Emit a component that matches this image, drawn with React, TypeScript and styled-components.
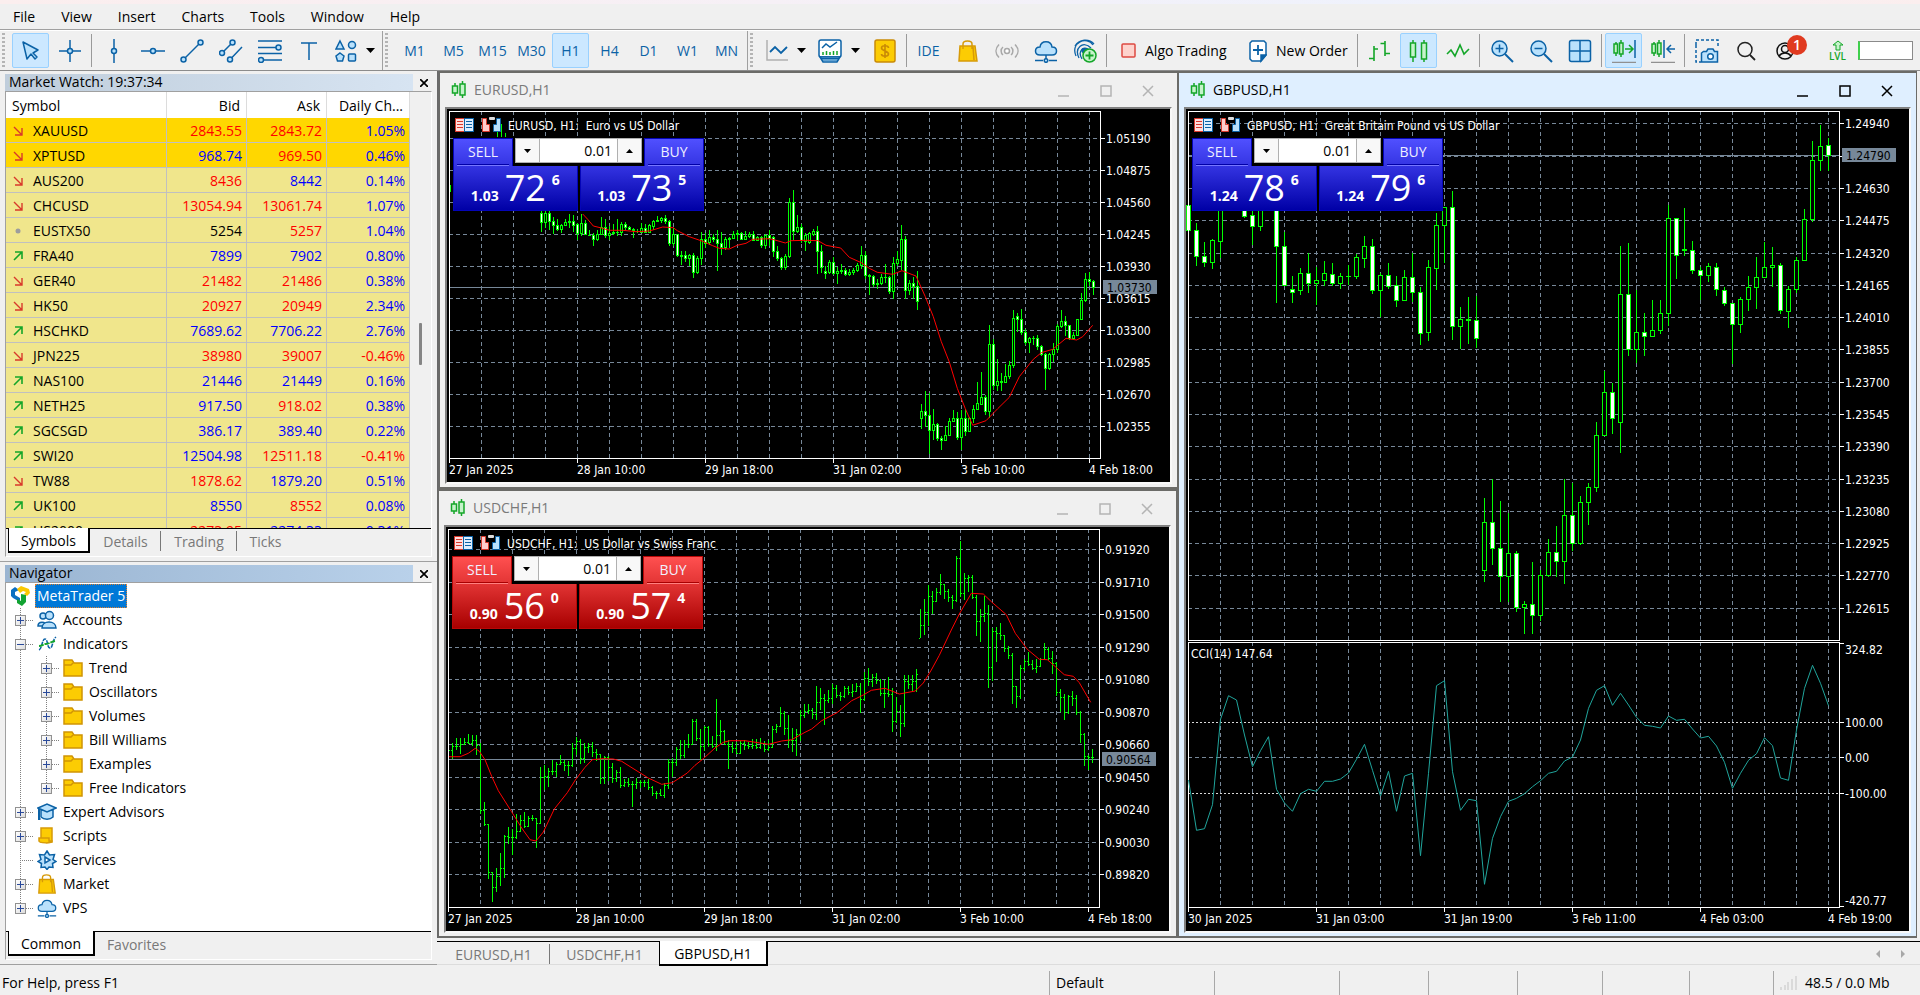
import React from 'react';
import styled, { createGlobalStyle, css } from 'styled-components';

const Global = createGlobalStyle`
  * { box-sizing: border-box; }
  body { margin: 0; background: #f0f0f0; }
  button, input { font: inherit; color: inherit; }
`;

const UI_FONT = '"Open Sans", "Noto Sans", sans-serif';
const CHART_FONT = '"DejaVu Sans Condensed", "DejaVu Sans", sans-serif';
const BLUE = '#0b62a6';
const SKY = '#b9e1fc';
const GREEN = '#14a629';
const MINT = '#c6f3cb';
const GOLD = '#fccc03';
const AMBER = '#c98a06';

/* ---------- shell ---------- */

const Shell = styled.div`
  display: flex;
  flex-direction: column;
  height: 100vh;
  overflow: hidden;
  background: #f0f0f0;
  color: #000;
  font-family: ${UI_FONT};
  font-size: 14px;
  line-height: 20px;
`;

const TopStrip = styled.div`
  flex: none;
  height: 4px;
  background: linear-gradient(90deg, #fbeeee 0%, #f6f0f6 40%, #eff2fc 72%, #fbeeee 100%);
`;

const MenuBar = styled.nav`
  flex: none;
  display: flex;
  align-items: center;
  gap: 26px;
  height: 27px;
  padding-left: 13px;
  border-bottom: 1px solid #fff;
  box-shadow: inset 0 -1px 0 #a0a0a0;
`;

const MenuItem = styled.button`
  border: 0;
  padding: 0;
  background: none;
  line-height: 20px;
`;

const Toolbars = styled.div`
  flex: none;
  display: flex;
  height: 40px;
  border-bottom: 1px solid #8c8c8c;
`;

const ToolGroup = styled.div<{ $grow?: boolean; $wide?: boolean }>`
  flex: ${p => (p.$grow ? '1 1 0' : 'none')};
  min-width: 0;
  display: flex;
  align-items: center;
  gap: 2px;
  padding-right: ${p => (p.$grow ? 7 : p.$wide ? 2 : 1)}px;
  border-right: ${p => (p.$grow ? 0 : 1)}px solid #a0a0a0;
`;

const Grip = styled.span<{ $space?: number }>`
  flex: none;
  width: 3px;
  height: 36px;
  margin: 0 ${p => p.$space ?? 5}px 0 2px;
  background: repeating-linear-gradient(180deg, #b4b4b4 0 2px, transparent 2px 4px);
`;

const Tool = styled.button<{ $on?: boolean; $w?: number; $left?: number; $ink?: string }>`
  flex: none;
  position: relative;
  display: flex;
  align-items: center;
  justify-content: ${p => (p.$left ? 'flex-start' : 'center')};
  gap: 9px;
  width: ${p => p.$w ?? 37}px;
  height: 35px;
  padding: 0 0 0 ${p => p.$left ?? 0}px;
  border: 1px solid ${p => (p.$on ? '#99d1ff' : 'transparent')};
  border-radius: 2px;
  background: ${p => (p.$on ? '#cce8ff' : 'transparent')};
  color: ${p => p.$ink ?? '#000'};
  white-space: nowrap;
`;

const ToolSep = styled.span`
  flex: none;
  width: 1px;
  height: 33px;
  margin: 0 1px;
  background: #9a9a9a;
`;

const Spacer = styled.span`
  flex: 1;
`;

const Badge = styled.span`
  position: absolute;
  top: 1px;
  left: 20px;
  width: 20px;
  height: 20px;
  border-radius: 50%;
  background: #e03a20;
  color: #fff;
  font-size: 14px;
  font-weight: 600;
  line-height: 20px;
  text-align: center;
`;

const LevelMeter = styled.div`
  flex: none;
  width: 55px;
  height: 19px;
  border: 1px solid #8a8a8a;
  border-left: 2px solid #3fd04c;
  background: #fff;
`;

const Body = styled.main`
  flex: 1;
  min-height: 0;
  display: flex;
`;

/* ---------- docked panels ---------- */

const Sidebar = styled.aside`
  flex: none;
  display: flex;
  flex-direction: column;
  width: 437px;
`;

const Panel = styled.section<{ $share: number }>`
  flex: ${p => p.$share} 1 0;
  min-height: 0;
  display: flex;
  flex-direction: column;
  padding: 3px 5px 4px;
  border-bottom: 1px solid #a0a0a0;
`;

const PanelHead = styled.header`
  flex: none;
  display: flex;
  justify-content: space-between;
  height: 17px;
`;

const PanelTitle = styled.h2<{ $active?: boolean }>`
  flex: 1;
  margin: 0 3px 0 0;
  padding-left: 4px;
  background: linear-gradient(90deg, ${p => (p.$active ? '#99b4d1, #b9d1ea' : '#bfcddb, #d7e4f2')});
  font-size: 14px;
  font-weight: 400;
  line-height: 16px;
`;

const PanelClose = styled.button`
  display: flex;
  align-items: center;
  justify-content: center;
  width: 16px;
  padding: 0;
  border: 0;
  background: none;
`;

const PanelBox = styled.div`
  flex: 1;
  min-height: 0;
  display: flex;
  flex-direction: column;
  border: 1px solid;
  border-color: #a0a0a0 #fff #fff #a0a0a0;
`;

const ListArea = styled.div`
  flex: 1;
  min-height: 0;
  display: flex;
  align-items: flex-start;
  overflow: hidden;
`;

const QuoteTable = styled.table`
  flex: none;
  width: 404px;
  table-layout: fixed;
  border-collapse: separate;
  border-spacing: 0;
`;

const HeadCell = styled.th<{ $left?: boolean }>`
  height: 26px;
  padding: 1px 6px 0;
  border-right: 1px solid #dcdcdc;
  background: #fff;
  font-weight: 400;
  text-align: ${p => (p.$left ? 'left' : 'right')};
  white-space: nowrap;
  overflow: hidden;
`;

const QuoteRow = styled.tr<{ $gold?: boolean }>`
  background: ${p => (p.$gold ? '#ffd700' : '#f0e68c')};
`;

const inks = { r: '#ff0000', b: '#0000ff', k: '#000000' };

const Cell = styled.td<{ $ink?: keyof typeof inks }>`
  height: 25px;
  padding: 2px 4px 0;
  border-right: 1px solid #c0c0c0;
  border-bottom: 1px solid #c0c0c0;
  color: ${p => inks[p.$ink ?? 'k']};
  text-align: right;
  white-space: nowrap;
`;

const SymbolName = styled.div`
  display: flex;
  align-items: center;
  gap: 10px;
  padding-left: 3px;
`;

const Scroller = styled.div`
  flex: 1;
  align-self: stretch;
  display: flex;
  justify-content: center;
  padding-top: 231px;
`;

const Thumb = styled.div`
  width: 3px;
  height: 42px;
  border-radius: 1px;
  background: #858585;
`;

const TabStrip = styled.div`
  flex: none;
  display: flex;
  height: 28px;
  padding-left: 2px;
  border-top: 1px solid #000;
`;

const Tab = styled.button<{ $on?: boolean; $w: number; $sep?: boolean }>`
  flex: none;
  width: ${p => p.$w}px;
  height: 24px;
  padding: 2px 0 0;
  border: 0;
  background: none;
  color: #787878;
  line-height: 22px;
  text-align: center;
  ${p => p.$sep && css`
    background: linear-gradient(#787878, #787878) right center / 1px 20px no-repeat;
  `}
  ${p => p.$on && css`
    height: 25px;
    margin-top: -1px;
    padding-top: 3px;
    border: solid #000;
    border-width: 0 2px 2px 1px;
    background: #fff;
    color: #000;
    line-height: 20px;
  `}
`;

/* ---------- navigator tree ---------- */

const Tree = styled.ul`
  flex: 1;
  min-height: 0;
  margin: 0;
  padding: 1px 0 0;
  background: #fff;
  list-style: none;
  overflow: hidden;
`;

const TreeItem = styled.li`
  display: flex;
  align-items: center;
  height: 24px;
`;

const RootItem = styled(TreeItem)`
  gap: 5px;
  padding-left: 5px;
`;

const RootLabel = styled.span`
  padding: 0 2px;
  outline: 1px dotted #e08030;
  outline-offset: -1px;
  background: #0078d7;
  color: #fff;
  line-height: 24px;
`;

const Rail = styled.span`
  flex: none;
  width: 26px;
  height: 24px;
  background: repeating-linear-gradient(180deg, #808080 0 1px, transparent 1px 2px) 14px 0 / 1px 100% no-repeat;
`;

const Branch = styled.span<{ $end?: boolean }>`
  flex: none;
  display: flex;
  align-items: center;
  width: 31px;
  height: 24px;
  padding-left: 9px;
  background:
    repeating-linear-gradient(180deg, #808080 0 1px, transparent 1px 2px) 14px 0 / 1px ${p => (p.$end ? '50%' : '100%')} no-repeat,
    repeating-linear-gradient(90deg, #808080 0 1px, transparent 1px 2px) 14px 12px / 14px 1px no-repeat;
`;

const Expander = styled.button`
  display: flex;
  width: 11px;
  height: 11px;
  padding: 0;
  border: 1px solid #919191;
  background: linear-gradient(135deg, #fff, #dcdcdc);
`;

const TreeText = styled.span`
  margin-left: 6px;
`;

/* ---------- MDI ---------- */

const Workspace = styled.div`
  flex: 1;
  min-width: 0;
  display: flex;
  flex-direction: column;
`;

const Mdi = styled.div`
  flex: 1;
  min-height: 0;
  display: grid;
  grid-template-columns: minmax(0, 740fr) minmax(0, 739fr);
  grid-template-rows: minmax(0, 418fr) minmax(0, 449fr);
  border: solid #f0f0f0;
  border-width: 0 3px 3px 0;
  box-shadow: inset 1px 0 0 #696969;
  padding-left: 1px;
  background: #6b6b6b;
`;

const Win = styled.section<{ $active?: boolean; $tall?: boolean; $shift?: 'left' | 'right' }>`
  display: flex;
  flex-direction: column;
  min-width: 0;
  grid-row: ${p => (p.$tall ? '1 / span 2' : 'auto')};
  grid-column: ${p => (p.$tall ? 2 : 1)};
  margin: 0 ${p => (p.$shift === 'right' ? 1 : 0)}px 0 ${p => (p.$shift === 'left' ? 1 : 0)}px;
  padding: 0 5px 3px;
  border: solid #6b6b68;
  border-width: 2px 1px;
  background: ${p => (p.$active ? '#dfefff' : '#f0f0f0')};
`;

const WinBar = styled.header<{ $active?: boolean }>`
  flex: none;
  display: flex;
  align-items: center;
  gap: 7px;
  height: 34px;
  padding: 0 3px 0 6px;
  color: ${p => (p.$active ? '#000' : '#7a7a7a')};
`;

const WinTitle = styled.h3`
  flex: 1;
  margin: 0;
  font-size: 14px;
  font-weight: 400;
`;

const WinButtons = styled.div<{ $active?: boolean }>`
  display: flex;
  padding-top: 2px;
  color: ${p => (p.$active ? '#000' : '#b4b4b4')};
`;

const WinButton = styled.button`
  display: flex;
  align-items: center;
  justify-content: center;
  width: 42px;
  height: 30px;
  padding: 0;
  border: 0;
  background: none;
`;

const Canvas = styled.div`
  position: relative;
  flex: 1;
  min-height: 0;
  border: 2px solid;
  border-color: #808080 #f8f8f8 #f8f8f8 #808080;
  background: #000;
`;

const ChartSvg = styled.svg`
  display: block;
  width: 100%;
  height: 100%;
  font-family: ${CHART_FONT};
  font-size: 12px;
`;

const DocTabs = styled.div`
  flex: none;
  display: flex;
  align-items: stretch;
  height: 24px;
  border-top: 1px solid #000;
  border-bottom: 1px solid #dcdcdc;
`;

const DocArrows = styled.div`
  margin-left: auto;
  display: flex;
  gap: 2px;
  padding-right: 6px;
`;

const ArrowButton = styled.button`
  width: 23px;
  padding: 0;
  border: 0;
  background: none;
`;

/* ---------- one-click trading ---------- */

const TradeBox = styled.form`
  position: absolute;
  top: 29px;
  left: 6px;
  width: 251px;
  background: #000;
`;

const TradeTop = styled.div`
  display: flex;
  align-items: flex-start;
  gap: 2px;
`;

const TradeRow = styled.div`
  display: flex;
  gap: 2px;
`;

const palettes = {
  blue: { top: '#5050ff', mid: '#3434e2', low: '#0000a6', edge: '#0505b8', glow: '#7777ff' },
  red: { top: '#ff5050', mid: '#e23434', low: '#a80000', edge: '#b80808', glow: '#ff8080' },
};
type Tone = keyof typeof palettes;

const SideButton = styled.button<{ $tone: Tone }>`
  flex: none;
  width: 60px;
  height: 28px;
  padding: 0 3px;
  border: solid ${p => palettes[p.$tone].edge};
  border-width: 1px 1px 0 1px;
  background: linear-gradient(${p => palettes[p.$tone].top}, ${p => palettes[p.$tone].mid});
  color: #f0f0ff;
`;

const SideText = styled.span<{ $tone: Tone }>`
  display: block;
  height: 27px;
  border-bottom: 1px solid ${p => palettes[p.$tone].glow};
  box-shadow: inset 0 -1px 0 ${p => palettes[p.$tone].low};
  line-height: 25px;
`;

const PriceButton = styled.button<{ $tone: Tone }>`
  flex: 1;
  display: flex;
  align-items: baseline;
  justify-content: center;
  gap: 6px;
  height: 45px;
  padding: 0;
  border: solid ${p => palettes[p.$tone].edge};
  border-width: 0 1px 1px 1px;
  background: linear-gradient(${p => palettes[p.$tone].mid}, ${p => palettes[p.$tone].low});
  color: #fff;
`;

const PriceSmall = styled.span<{ $raised?: boolean }>`
  font-size: 14px;
  font-weight: 700;
  line-height: 20px;
  align-self: ${p => (p.$raised ? 'flex-start' : 'baseline')};
  margin-top: ${p => (p.$raised ? 4 : 0)}px;
`;

const PriceBig = styled.span`
  font-size: 36px;
  line-height: 44px;
`;

const Volume = styled.div`
  flex: 1 1 0;
  min-width: 0;
  display: flex;
  height: 25px;
  border: 1px solid #b0b0b0;
  background: #fff;
`;

const VolumeInput = styled.input`
  flex: 1 1 0;
  width: 0;
  min-width: 0;
  padding: 0 5px 0 0;
  border: solid #b0b0b0;
  border-width: 0 1px;
  background: #fff;
  text-align: right;
  line-height: 22px;
`;

const Step = styled.button`
  flex: none;
  display: flex;
  align-items: center;
  justify-content: center;
  width: 23px;
  padding: 0;
  border: 0;
  background: #f8f8f8;
`;

/* ---------- status bar ---------- */

const StatusBar = styled.footer`
  flex: none;
  display: flex;
  align-items: center;
  height: 30px;
  padding: 5px 29px 0 2px;
`;

const StatusCell = styled.span<{ $w?: number }>`
  display: flex;
  align-items: center;
  gap: 8px;
  ${p => (p.$w ? `flex: none; width: ${p.$w}px; padding-left: 6px; border-left: 1px solid #a8a8a8;` : 'flex: 1;')}
  height: 24px;
`;

/* ---------- icons ---------- */

type IconProps = { w?: number; h?: number; children: React.ReactNode };
const Icon = ({ w = 24, h = 24, children }: IconProps) => (
  <svg width={w} height={h} viewBox={`0 0 ${w} ${h}`} fill="none" stroke={BLUE} strokeWidth="1.5" aria-hidden="true">
    {children}
  </svg>
);

const Caret = () => (
  <svg width="9" height="5" viewBox="0 0 9 5" aria-hidden="true"><path d="M0 0h9L4.500 5z" fill="#000" /></svg>
);

const CursorIcon = () => <Icon><path d="M4 3l4 17 4-5 4 5 2-2-4-4 5-3z" fill={SKY} strokeLinejoin="round" /></Icon>;
const CrossIcon = () => <Icon><path d="M12 1v8M12 15v8M1 12h8M15 12h8" /><circle cx="12" cy="12" r="2.500" fill={SKY} /></Icon>;
const VLineIcon = () => <Icon><path d="M12 0v9M12 15v9" /><circle cx="12" cy="12" r="2.500" fill={SKY} /></Icon>;
const HLineIcon = () => <Icon><path d="M0 12h9M15 12h9" /><circle cx="12" cy="12" r="2.500" fill={SKY} /></Icon>;
const TrendIcon = () => (
  <Icon><path d="M5 19L19 5" /><circle cx="3.500" cy="20.500" r="2.500" fill={SKY} /><circle cx="20.500" cy="3.500" r="2.500" fill={SKY} /></Icon>
);
const ChannelIcon = () => (
  <Icon>
    <path d="M5 12l7-7M12.500 19L23 8" />
    <circle cx="3" cy="14" r="2.500" fill={SKY} /><circle cx="13.500" cy="3.500" r="2.500" fill={SKY} /><circle cx="11" cy="20.500" r="2.500" fill={SKY} />
  </Icon>
);
const FiboIcon = () => (
  <Icon>
    <path d="M0 2h24M0 8.500h18M0 14.500h24M6 21h18" />
    <circle cx="20.500" cy="8.500" r="2.500" fill={SKY} /><circle cx="3" cy="21" r="2.500" fill={SKY} />
  </Icon>
);
const TextIcon = () => <Icon><path d="M4 4h16M12 4v17" /></Icon>;
const ShapesIcon = () => (
  <Icon w={22}>
    <g fill={SKY}><path d="M5 2l4 8H1z" /><circle cx="17" cy="6" r="3.500" /><path d="M5 14l4 3-1.500 5h-5L1 17z" /><rect x="13.500" y="15" width="7" height="7" rx="1" /></g>
  </Icon>
);
const ChartTypeIcon = () => <Icon w={22}><path d="M1 1v20h21" stroke="#b0b0b0" /><path d="M4 13l5-5 6 6 6-6" strokeWidth="1.800" /></Icon>;
const TemplateIcon = () => (
  <Icon>
    <rect x="1" y="1" width="22" height="17" rx="2" fill="#fff" />
    <path d="M2 18l3 5h14l3-5z" fill={SKY} /><path d="M3 19.500h18M4 21h16" strokeWidth="1" />
    <path d="M4 9l4-4 4 3 7-5" />
    <path d="M5 16v-3M8.500 16v-4M12 16v-3M15.500 16v-4M19 16v-4" stroke={GREEN} />
  </Icon>
);
const DollarIcon = () => (
  <Icon w={22}>
    <rect x="1" y="1" width="20" height="22" rx="2" fill={GOLD} stroke={AMBER} />
    <path d="M14.500 9c0-3-7-3-7 0s7 3 7 6-7 3-7 0M11 5v14" stroke={AMBER} strokeWidth="1.600" />
  </Icon>
);
const BagIcon = ({ s = 22 }: { s?: number }) => (
  <svg width={s} height={s} viewBox="0 0 22 22" fill="none" stroke="#d69a08" strokeWidth="1.500" aria-hidden="true">
    <path d="M3 6h15l2 15H2z" fill={GOLD} /><path d="M6 9V4c0-4 9-4 9 0v5M16 7l1 13" />
  </svg>
);
const SignalIcon = () => (
  <Icon><g stroke="#a8a8a8"><circle cx="12" cy="12" r="2.500" fill="#fff" /><path d="M8 8c-2.500 2-2.500 6 0 8M16 8c2.500 2 2.500 6 0 8M4 5.500c-4 4-4 9 0 13M20 5.500c4 4 4 9 0 13" /></g></Icon>
);
const CloudIcon = ({ s = 24 }: { s?: number }) => (
  <svg width={s} height={s} viewBox="0 0 24 24" fill="none" stroke={BLUE} strokeWidth="1.500" aria-hidden="true">
    <path d="M6 16c-6 0-6-8 0-8 1-7 11-7 12 0 6 0 6 8 0 8z" fill={SKY} /><path d="M12 16v4M1 21.500h8M15 21.500h8" /><circle cx="12" cy="21.500" r="1.800" fill={SKY} />
  </svg>
);
const PrintIcon = () => (
  <Icon>
    <path d="M3 17C-3 3 14-3 20 6M6 19C1 9 10 1 18 9M9 20C4 12 11 6 16 11M2 7C6 0 16-1 21 5" strokeWidth="1.300" />
    <circle cx="11" cy="11.500" r="2" fill={BLUE} />
    <circle cx="16.500" cy="16.500" r="6.500" fill={MINT} stroke={GREEN} /><path d="M16.500 12.500v8M12.500 16.500h8" stroke={GREEN} strokeWidth="1.800" />
  </Icon>
);
const AlgoIcon = () => <Icon w={15} h={15}><rect x="1" y="1" width="13" height="13" rx="1" fill="#fdd3cd" stroke="#dd4a41" /></Icon>;
const OrderIcon = () => (
  <Icon w={18}><path d="M3 2h12l2 2v12l-5 6H3l-2-2V4z" fill="#fff" /><path d="M17 16h-5v6z" fill={BLUE} /><path d="M9 6v10M4 11h10" strokeWidth="1.800" /></Icon>
);
const BarsIcon = () => <Icon><path d="M6 7v15M1 19.500h5M6 10h4M17 2v15M12.500 4.500H17M17 14.500h5" stroke={GREEN} strokeWidth="1.600" /></Icon>;
const CandlesIcon = () => (
  <Icon><g stroke={GREEN}><path d="M6 1v22M17 1v22" /><rect x="3.500" y="4" width="5" height="14" fill={MINT} /><rect x="14.500" y="4" width="5" height="16" fill={MINT} /></g></Icon>
);
const LineIcon = () => <Icon><path d="M1 15l4-4 4 6 5-11 4 9 5-5" stroke={GREEN} strokeWidth="1.600" /></Icon>;
const Zoom = ({ plus }: { plus?: boolean }) => (
  <Icon><circle cx="9.500" cy="9.500" r="7.500" fill={SKY} /><path d={plus ? 'M5.500 9.500h8M9.500 5.500v8' : 'M5.500 9.500h8'} /><path d="M15 15l8 8" strokeWidth="2" /></Icon>
);
const TileIcon = () => <Icon><rect x="1.500" y="1.500" width="21" height="21" rx="2" fill={SKY} /><path d="M12 2v20M2 12h20" /></Icon>;
const AutoScrollIcon = () => (
  <Icon><path d="M4 3v14M9 1v17" stroke={GREEN} /><rect x="2" y="5" width="3.500" height="9" fill={MINT} stroke={GREEN} /><rect x="7.500" y="4" width="3.500" height="11" fill={MINT} stroke={GREEN} /><path d="M13 10h7M17 6l4 4-4 4" stroke={GREEN} /><path d="M23 1v18" /><path d="M0 23.500h24" stroke="#909090" /></Icon>
);
const ChartShiftIcon = () => (
  <Icon><path d="M3 3v14M8 1v17" stroke={GREEN} /><rect x="1" y="5" width="3.500" height="9" fill={MINT} stroke={GREEN} /><rect x="6.500" y="4" width="3.500" height="11" fill={MINT} stroke={GREEN} /><path d="M13 1v18M24 10h-7M20 6l-4 4 4 4" /><path d="M0 23.500h24" stroke="#909090" /></Icon>
);
const CameraIcon = () => (
  <Icon><path d="M1 6V1h22v7M1 6v17h5" strokeDasharray="3 2" /><path d="M6.500 23V14l2-1.500h3l1.500-2.500h5l1.500 2.500h3V23z" fill={SKY} /><circle cx="15.500" cy="17.500" r="2.800" fill="#fff" /></Icon>
);
const SearchIcon = () => <Icon w={20} h={20}><g stroke="#222"><circle cx="9" cy="8.500" r="7" /><path d="M14 14l5 5" strokeWidth="1.800" /></g></Icon>;
const UserIcon = () => <Icon w={18} h={18}><g stroke="#111"><circle cx="9" cy="9" r="8" /><circle cx="9" cy="7" r="3.500" /><path d="M3 14c3-4 9-4 12 0" /></g></Icon>;

const LevelTool = styled(Tool)`
  flex-direction: column;
  gap: 0;
  color: ${GREEN};
  font-size: 10px;
  font-weight: 600;
  line-height: 11px;
`;

const DownMark = () => <Icon w={10} h={10}><path d="M1 1l8 8M9 2v7H2" stroke="#d8392b" strokeWidth="1.400" /></Icon>;
const UpMark = () => <Icon w={10} h={10}><path d="M1 9l8-8M2 1h7v7" stroke={GREEN} strokeWidth="1.600" /></Icon>;
const FlatMark = () => <Icon w={10} h={10}><circle cx="5" cy="5" r="2.500" fill="#9d9d9d" stroke="none" /></Icon>;

const WinIcon = () => (
  <Icon w={16} h={18}><g stroke={GREEN}><path d="M4 2v13M11.500 0v17" /><rect x="1.500" y="5" width="5" height="7" fill={MINT} /><rect x="9" y="3" width="5" height="11" fill={MINT} /></g></Icon>
);

const LogoIcon = () => (
  <Icon w={19} h={20}>
    <g stroke="none">
      <path d="M0 4l4-3 4 3-4 2v3l5 3v4L2 12 0 10z" fill="#0a6fc2" />
      <path d="M6 3l4-3 8 3 1 4-3 3-3-2 2-2-3-1-3 2z" fill="#fbc803" />
      <path d="M10 8l5 1v7l-4 4-5-3v-4l4 2z" fill="#12a332" />
    </g>
  </Icon>
);
const AccountsIcon = () => (
  <Icon w={20} h={20}><g fill={SKY}><path d="M1 16c0-5 8-5 8 0z" /><circle cx="6" cy="6" r="3" /><path d="M5 18c0-8 14-8 14 0z" /><circle cx="12.500" cy="5.500" r="4" /></g></Icon>
);
const IndicatorIcon = () => <Icon w={20} h={20}><path d="M2 16c3-1 3-11 6-11s2 9 5 9 2-8 6-11" strokeDasharray="4 1" /><path d="M2 12c4 0 4-2 7-2s4-2 9-3" stroke={GREEN} strokeWidth="1.800" strokeDasharray="5 1" /></Icon>;
const FolderIcon = () => <Icon w={20} h={20}><path d="M1 2h8l2 3h8v13H1z" fill={GOLD} stroke="#d09405" /><path d="M1 7h7l2-2" stroke="#d09405" /></Icon>;
const ExpertIcon = () => <Icon w={20} h={20}><path d="M4 8v7c3 3 9 3 12 0V8z" fill={SKY} /><path d="M1 6l9-4 9 4-9 4z" fill={SKY} /><path d="M2 7v9M1 17h2.500" strokeWidth="2" /></Icon>;
const ScriptIcon = () => <Icon w={20} h={20}><path d="M4 2h11v14H4z" fill={GOLD} stroke="#d69a08" /><path d="M2 12h10v3h3c0 3-13 2-13 0z" fill={GOLD} stroke="#d69a08" /></Icon>;
const ServiceIcon = () => <Icon w={20} h={20}><path d="M10 1l2.500 4 5-.5-1.500 5 3 2-3.500 2 .5 4-4-.5-2 2.500-2-2.500-4 .5.5-4-3.500-2 3-2-1.500-5 5 .5z" fill={SKY} /><path d="M8 7l5 3-5 3z" fill="#fff" /></Icon>;

/* ---------- chart drawing ---------- */

const LIME = '#00ff00';
const SLATE = '#778899';
const W = 723;
const LEFT = 2;
const RIGHT = 653;

type YMap = (v: number) => number;
// Bar: high, body top, body bottom, low, 1 when the close is below the open
type Bar = [number, number, number, number, number];

function Candles({ bars, start, step, y }: { bars: Bar[]; start: number; step: number; y: YMap }) {
  const half = step === 8 ? 2 : 1;
  return (
    <g shapeRendering="crispEdges">
      {bars.map(([h, t, b, l, down], i) => {
        const x = LEFT + (start + i) * step;
        const top = y(t);
        const size = Math.max(1, y(b) - top + 1);
        return (
          <g key={i}>
            <rect x={x} y={y(h)} width={1} height={Math.max(1, y(l) - y(h))} fill={LIME} />
            <rect x={x - half} y={top} width={half * 2 + 1} height={size} fill={LIME} />
            {size > 2 && <rect x={x - half + 1} y={top + 1} width={half * 2 - 1} height={size - 2} fill={down ? '#fff' : '#000'} />}
          </g>
        );
      })}
    </g>
  );
}

// Each entry: high, low, close; the open is the previous close
function OhlcBars({ bars, y }: { bars: [number, number, number][]; y: YMap }) {
  return (
    <g shapeRendering="crispEdges" fill={LIME}>
      {bars.map(([h, l, c], i) => {
        const x = LEFT + i * 4;
        const prev = i > 0 ? bars[i - 1][2] : c;
        const open = Math.min(Math.max(prev, h), l);
        return (
          <g key={i}>
            <rect x={x} y={y(h)} width={1} height={Math.max(1, y(l) - y(h))} />
            {i > 0 && <rect x={x - 1} y={y(open)} width={1} height={1} />}
            <rect x={x + 1} y={y(c)} width={1} height={1} />
          </g>
        );
      })}
    </g>
  );
}

function Grid({ ys, top, bottom }: { ys: number[]; top: number; bottom: number }) {
  const cols = Array.from({ length: 20 }, (_, i) => LEFT + 32 * (i + 1));
  return (
    <g stroke={SLATE} strokeDasharray="4 3" shapeRendering="crispEdges">
      {cols.map(x => <line key={x} x1={x + 0.5} x2={x + 0.5} y1={top} y2={bottom} />)}
      {ys.map(v => <line key={v} x1={LEFT} x2={RIGHT} y1={v + 0.5} y2={v + 0.5} />)}
    </g>
  );
}

function PriceAxis({ ys, labels }: { ys: number[]; labels: string[] }) {
  return (
    <g fill="#fff">
      {ys.map((v, i) => (
        <g key={v}>
          <rect x={RIGHT} y={v} width={5} height={1} />
          <text x={659} y={v + 5}>{labels[i]}</text>
        </g>
      ))}
    </g>
  );
}

function PriceTag({ at, text }: { at: number; text: string }) {
  return (
    <g>
      <rect x={LEFT} y={at} width={RIGHT - LEFT} height={1} fill={SLATE} />
      <rect x={656} y={at - 7} width={54} height={14} fill={SLATE} />
      <text x={660} y={at + 5} fill="#000">{text}</text>
    </g>
  );
}

function TimeAxis({ y, labels }: { y: number; labels: string[] }) {
  return (
    <g fill="#fff">
      {labels.map((t, i) => (
        <g key={t}>
          <rect x={LEFT + 128 * i} y={y} width={1} height={5} />
          <text x={LEFT + 128 * i} y={y + 16}>{t}</text>
        </g>
      ))}
    </g>
  );
}

function Frame({ top, bottom }: { top: number; bottom: number }) {
  return <rect x={LEFT + 0.5} y={top + 0.5} width={RIGHT - LEFT} height={bottom - top} fill="none" stroke="#fff" shapeRendering="crispEdges" />;
}

function ChartCaption({ children }: { children: React.ReactNode }) {
  return (
    <g>
      <rect x={8.5} y={9.5} width={9} height={13} fill="#fdd" stroke="#d8392b" />
      <rect x={17.5} y={9.5} width={9} height={13} fill="#def" stroke={BLUE} />
      <path d="M10 12.500h6M10 15.500h6M10 18.500h6" stroke="#d8392b" />
      <path d="M19 12.500h6M19 15.500h6M19 18.500h6" stroke={BLUE} />
      <path d="M35.500 9.500h4v6h3v7h-7z" fill="#fcc" stroke="#d8392b" />
      <path d="M53.500 9.500h-4v6h-3v7h7z" fill={SKY} stroke={BLUE} />
      <rect x={42} y={8} width={6} height={3} rx={1} fill="#ddd" />
      <text x={61} y={21} fill="#fff" xmlSpace="preserve">{children}</text>
    </g>
  );
}

const path = (pts: [number, number][]) => pts.map(([x, y], i) => `${i ? 'L' : 'M'}${x.toFixed(1)} ${y.toFixed(1)}`).join('');

const mapY = (v: number) => Math.round(v / 3 - 39.4);
const gbpY = (v: number) => Math.round(v / 2.7034 - 39.4);

const eurBars: Bar[] = [
  [420, 430, 458, 486, 1], [420, 430, 458, 474, 0], [420, 430, 455, 480, 1], [443, 455, 466, 494, 1], [449, 465, 478, 484, 1],
  [462, 465, 478, 490, 0], [449, 457, 466, 468, 0], [433, 455, 457, 474, 0], [435, 453, 467, 486, 1], [460, 463, 490, 510, 1],
  [432, 460, 490, 500, 0], [452, 460, 493, 496, 1], [480, 495, 496, 500, 0], [490, 497, 508, 528, 1], [480, 492, 508, 514, 0],
  [443, 473, 493, 495, 0], [447, 473, 497, 505, 1], [470, 490, 497, 512, 0], [462, 486, 491, 495, 0], [449, 487, 488, 500, 0],
  [457, 462, 487, 500, 0], [458, 462, 472, 480, 1], [468, 472, 478, 480, 1], [475, 478, 482, 504, 1], [478, 483, 484, 490, 0],
  [460, 475, 486, 490, 0], [462, 475, 486, 490, 1], [463, 467, 486, 490, 0], [450, 455, 468, 482, 0], [440, 451, 455, 458, 0],
  [442, 446, 451, 460, 0], [436, 446, 454, 462, 1], [452, 454, 520, 530, 1], [474, 493, 520, 530, 0], [492, 493, 555, 562, 1],
  [545, 555, 558, 585, 1], [543, 556, 566, 578, 1], [552, 556, 566, 590, 0], [550, 556, 607, 624, 1], [560, 565, 607, 612, 0],
  [487, 508, 565, 585, 0], [490, 508, 520, 535, 1], [480, 502, 517, 525, 0], [492, 502, 507, 516, 1], [480, 507, 520, 605, 1],
  [487, 520, 533, 557, 1], [502, 508, 533, 540, 0], [503, 505, 508, 535, 0], [484, 492, 505, 508, 0], [480, 489, 492, 510, 1],
  [487, 489, 508, 512, 1], [485, 499, 508, 510, 0], [486, 492, 500, 504, 0], [483, 492, 510, 515, 1], [500, 502, 511, 515, 0],
  [500, 502, 525, 535, 1], [492, 497, 525, 538, 0], [482, 497, 505, 530, 1], [500, 502, 543, 562, 1], [530, 543, 565, 575, 1],
  [562, 565, 593, 600, 1], [552, 558, 593, 600, 0], [384, 396, 560, 566, 0], [360, 396, 485, 510, 1], [437, 472, 485, 490, 0],
  [462, 472, 510, 520, 1], [490, 495, 515, 543, 0], [488, 490, 518, 522, 0], [477, 484, 493, 498, 0], [468, 484, 545, 612, 1],
  [525, 545, 592, 609, 1], [590, 604, 610, 627, 1], [572, 578, 608, 613, 0], [562, 578, 610, 615, 1], [592, 604, 610, 642, 0],
  [583, 600, 604, 612, 1], [596, 600, 614, 620, 1], [597, 606, 612, 620, 0], [594, 600, 607, 617, 0], [581, 585, 600, 608, 0],
  [528, 555, 585, 597, 0], [545, 555, 617, 627, 1], [612, 617, 620, 675, 1], [616, 618, 642, 652, 1], [627, 640, 643, 657, 0],
  [612, 622, 640, 647, 0], [582, 622, 623, 640, 0], [620, 622, 665, 672, 1], [563, 580, 665, 689, 0], [544, 568, 580, 589, 0],
  [465, 508, 570, 600, 0], [500, 508, 660, 687, 1], [630, 640, 660, 677, 0], [622, 640, 650, 687, 1], [605, 648, 695, 722, 1],
  [1002, 1023, 1045, 1077, 0], [963, 1023, 1037, 1073, 1], [970, 1036, 1081, 1152, 1], [1017, 1062, 1081, 1112, 0], [1060, 1062, 1105, 1115, 1],
  [1100, 1104, 1110, 1142, 1], [1070, 1096, 1112, 1115, 0], [1044, 1054, 1096, 1100, 0], [1020, 1045, 1054, 1058, 0], [1026, 1045, 1102, 1112, 1],
  [1020, 1045, 1102, 1140, 0], [1018, 1045, 1084, 1100, 1], [1042, 1045, 1084, 1088, 0], [1005, 1018, 1045, 1060, 0], [938, 1000, 1018, 1022, 0],
  [908, 982, 1003, 1006, 0], [975, 982, 1024, 1035, 1], [765, 823, 1024, 1045, 0], [808, 823, 945, 960, 1], [867, 934, 946, 965, 0],
  [910, 935, 936, 965, 0], [882, 919, 937, 940, 0], [874, 886, 920, 927, 0], [720, 745, 886, 895, 0], [730, 740, 748, 786, 1],
  [717, 748, 787, 795, 1], [778, 787, 818, 827, 1], [803, 805, 818, 850, 0], [798, 805, 806, 825, 0], [797, 805, 830, 840, 1],
  [825, 829, 853, 858, 1], [850, 853, 896, 960, 1], [850, 853, 896, 900, 0], [820, 837, 853, 877, 0], [762, 768, 838, 850, 0],
  [720, 754, 769, 775, 0], [738, 754, 767, 798, 1], [765, 767, 805, 810, 1], [787, 796, 805, 812, 0], [747, 748, 797, 800, 0],
  [669, 690, 748, 752, 0], [609, 628, 691, 697, 0], [606, 628, 634, 650, 1], [630, 634, 653, 675, 1],
];

const eurMa: [number, number][] = [
  [440, 432], [455, 448], [472, 468], [500, 475], [520, 481], [560, 481], [600, 485], [640, 483], [680, 471], [712, 473], [724, 482],
  [760, 500], [800, 514], [830, 527], [850, 535], [880, 537], [904, 526], [930, 520], [950, 508], [1000, 506], [1020, 511], [1048, 519],
  [1065, 512], [1110, 511], [1146, 512], [1170, 526], [1214, 534], [1240, 562], [1276, 578], [1300, 595], [1324, 607], [1370, 613],
  [1398, 602], [1440, 618], [1468, 680], [1492, 740], [1516, 815], [1540, 876], [1564, 955], [1588, 1016], [1610, 1066], [1650, 1052],
  [1685, 1016], [1720, 982], [1750, 920], [1792, 868], [1816, 848], [1850, 838], [1890, 805], [1922, 810], [1940, 800], [1970, 766],
];

const chfBars: [number, number, number][] = [
  [780, 790, 788], [765, 815, 776], [752, 787, 776], [750, 800, 769], [750, 772, 763], [738, 770, 767], [741, 775, 756], [741, 803, 772],
  [767, 980, 967], [942, 1016, 1010], [1008, 1173, 1152], [1152, 1242, 1198], [1140, 1212, 1164], [1095, 1194, 1140], [1041, 1170, 1044],
  [1017, 1070, 1048], [1025, 1102, 1048], [980, 1055, 1030], [981, 1033, 997], [972, 1022, 1015], [986, 1017, 990], [981, 1000, 992],
  [992, 1082, 1006], [837, 1008, 869], [831, 908, 866], [842, 897, 850], [816, 862, 850], [822, 867, 828], [801, 833, 822], [817, 850, 833],
  [820, 865, 832], [766, 838, 782], [747, 803, 760], [754, 829, 812], [767, 825, 778], [767, 797, 776], [762, 808, 794], [783, 820, 798],
  [798, 888, 872], [804, 890, 808], [804, 880, 838], [826, 886, 870], [848, 884, 853], [838, 900, 892], [874, 898, 884], [872, 898, 889],
  [880, 957, 888], [872, 903, 882], [877, 900, 884], [877, 898, 884], [874, 908, 898], [896, 924, 915], [910, 934, 916], [905, 925, 922],
  [887, 930, 893], [814, 904, 822], [812, 868, 822], [778, 836, 784], [757, 815, 802], [756, 810, 770], [740, 782, 770], [695, 772, 700],
  [693, 760, 751], [725, 817, 775], [714, 790, 718], [714, 778, 770], [744, 780, 776], [633, 791, 742], [698, 770, 730], [728, 772, 768],
  [757, 843, 775], [762, 797, 780], [763, 799, 796], [760, 800, 766], [758, 787, 773], [762, 783, 775], [754, 784, 772], [754, 785, 778],
  [750, 784, 766], [759, 792, 785], [757, 791, 779], [714, 782, 723], [708, 735, 714], [659, 717, 676], [671, 742, 720], [682, 782, 758],
  [722, 793, 757], [723, 805, 740], [668, 760, 682], [648, 690, 670], [648, 678, 668], [660, 693, 680], [594, 698, 643], [602, 666, 630],
  [618, 713, 636], [606, 646, 632], [590, 650, 601], [593, 630, 622], [614, 640, 625], [594, 630, 600], [594, 622, 613], [590, 628, 611],
  [585, 612, 595], [585, 675, 634], [552, 640, 572], [540, 595, 580], [558, 597, 568], [555, 590, 577], [573, 624, 616], [576, 660, 616],
  [567, 627, 619], [602, 732, 701], [627, 706, 670], [651, 747, 706], [563, 718, 579], [561, 603, 588], [561, 609, 579], [543, 612, 560],
  [365, 450, 412], [333, 441, 374], [291, 414, 325], [309, 378, 340], [300, 343, 313], [258, 322, 289], [288, 333, 309], [303, 343, 328],
  [321, 364, 337], [204, 342, 211], [160, 329, 316], [255, 336, 271], [262, 312, 268], [262, 335, 328], [322, 444, 400], [364, 462, 384],
  [325, 402, 376], [353, 600, 538], [422, 580, 430], [419, 522, 436], [407, 458, 442], [441, 492, 481], [474, 514, 502], [497, 648, 594],
  [596, 662, 625], [533, 635, 541], [513, 550, 520], [492, 535, 529], [516, 548, 541], [515, 557, 535], [510, 538, 514], [465, 516, 484],
  [477, 518, 512], [491, 558, 526], [524, 624, 613], [605, 672, 629], [618, 696, 674], [621, 678, 624], [609, 655, 630], [623, 682, 674],
  [671, 766, 739], [737, 834, 805], [802, 847, 808], [783, 825, 808],
];

const chfMa: [number, number][] = [
  [40, 806], [76, 806], [100, 796], [121, 781], [133, 790], [150, 815], [170, 865], [190, 908], [229, 970], [260, 1020], [285, 1055],
  [303, 1059], [325, 1032], [358, 963], [397, 914], [421, 876], [450, 838], [472, 815], [500, 812], [535, 813], [560, 820], [600, 845],
  [640, 870], [680, 889], [712, 884], [757, 855], [780, 832], [805, 812], [840, 780], [865, 763], [885, 758], [930, 758], [1000, 769],
  [1040, 759], [1070, 755], [1110, 733], [1130, 723], [1160, 698], [1206, 674], [1250, 638], [1285, 621], [1309, 607], [1350, 601],
  [1393, 618], [1441, 609], [1465, 585], [1489, 546], [1513, 502], [1549, 426], [1573, 378], [1609, 316], [1645, 318], [1670, 342],
  [1714, 380], [1741, 436], [1777, 484], [1813, 514], [1837, 515], [1861, 536], [1888, 560], [1915, 565], [1933, 584], [1967, 643],
];

const gbpBars: Bar[] = [
  [367, 367, 433, 433, 1], [414, 433, 505, 532, 1], [465, 503, 520, 534, 1], [457, 462, 521, 538, 0], [380, 380, 464, 510, 0],
  [350, 355, 370, 375, 0], [350, 355, 370, 375, 1], [370, 372, 395, 400, 1], [370, 392, 423, 475, 1], [370, 375, 423, 437, 0],
  [350, 355, 370, 375, 0], [360, 370, 478, 632, 1], [440, 476, 583, 583, 1], [557, 592, 601, 630, 1], [537, 549, 597, 610, 0],
  [497, 549, 578, 605, 1], [534, 568, 578, 637, 0], [518, 549, 570, 584, 0], [523, 552, 578, 586, 1], [549, 557, 578, 594, 0],
  [527, 558, 559, 583, 0], [498, 506, 559, 567, 0], [451, 476, 508, 537, 0], [457, 476, 597, 607, 1], [549, 554, 597, 668, 0],
  [524, 554, 586, 594, 1], [558, 582, 623, 642, 1], [543, 560, 623, 625, 0], [496, 562, 602, 627, 1], [589, 600, 713, 745, 1],
  [516, 535, 710, 734, 0], [388, 419, 537, 597, 0], [371, 371, 420, 523, 0], [327, 371, 694, 730, 1], [641, 674, 694, 755, 0],
  [616, 675, 676, 742, 0], [613, 677, 726, 752, 1], [1157, 1222, 1353, 1384, 0], [1106, 1222, 1294, 1338, 1], [1165, 1292, 1370, 1438, 1],
  [1199, 1306, 1370, 1438, 0], [1302, 1306, 1453, 1465, 1], [1436, 1446, 1452, 1525, 0], [1332, 1446, 1475, 1525, 1], [1354, 1366, 1475, 1490, 0],
  [1268, 1303, 1366, 1372, 0], [1234, 1303, 1328, 1372, 1], [1108, 1204, 1328, 1391, 0], [1118, 1204, 1280, 1302, 1], [1152, 1168, 1280, 1284, 0],
  [1118, 1128, 1169, 1232, 0], [954, 988, 1128, 1143, 0], [815, 871, 988, 988, 0], [846, 871, 942, 984, 1], [476, 606, 953, 1037, 0],
  [470, 606, 755, 773, 1], [597, 709, 755, 792, 0], [657, 709, 720, 775, 1], [622, 704, 720, 720, 0], [622, 658, 704, 715, 0],
  [365, 401, 658, 692, 0], [401, 401, 502, 567, 1], [373, 486, 487, 505, 0], [464, 488, 542, 553, 1], [534, 542, 555, 623, 1],
  [522, 531, 555, 575, 0], [522, 534, 594, 613, 1], [589, 595, 632, 640, 1], [631, 631, 688, 797, 1], [614, 620, 688, 713, 0],
  [557, 587, 620, 652, 0], [506, 560, 587, 648, 0], [465, 534, 560, 560, 0], [479, 528, 534, 588, 0], [524, 528, 651, 661, 1],
  [585, 593, 653, 699, 0], [506, 515, 594, 603, 0], [377, 404, 515, 515, 0], [193, 244, 404, 411, 0], [149, 206, 244, 275, 0],
  [184, 203, 231, 275, 1],
];

const cci = [
  450, 601, 596, 524, 268, 197, 210, 315, 410, 362, 320, 478, 519, 544, 491, 478, 484, 454, 454, 447, 429, 388, 343, 421, 498, 424, 544,
  438, 430, 677, 430, 167, 152, 425, 541, 508, 512, 763, 625, 560, 514, 505, 491, 470, 452, 430, 424, 393, 381, 330, 235, 181, 167, 226,
  190, 225, 262, 286, 289, 294, 258, 271, 268, 297, 324, 319, 348, 397, 475, 430, 391, 371, 323, 347, 444, 451, 300, 175, 106, 160, 227,
];

const maPath = (pts: [number, number][]) => path(pts.map(([x, v]) => [x / 3 - 11, v / 3 - 39]));

const leftTimes = ['27 Jan 2025', '28 Jan 10:00', '29 Jan 18:00', '31 Jan 02:00', '3 Feb 10:00', '4 Feb 18:00'];
const rightTimes = ['30 Jan 2025', '31 Jan 03:00', '31 Jan 19:00', '3 Feb 11:00', '4 Feb 03:00', '4 Feb 19:00'];
const eurYs = [29, 61, 93, 125, 157, 189, 221, 253, 285, 317];
const eurLabels = ['1.05190', '1.04875', '1.04560', '1.04245', '1.03930', '1.03615', '1.03300', '1.02985', '1.02670', '1.02355'];
const chfYs = [22, 55, 87, 120, 152, 185, 217, 250, 282, 315, 347];
const chfLabels = ['0.91920', '0.91710', '0.91500', '0.91290', '0.91080', '0.90870', '0.90660', '0.90450', '0.90240', '0.90030', '0.89820'];
const gbpYs = [14, 47, 79, 111, 144, 176, 208, 240, 273, 305, 337, 370, 402, 434, 466, 499];
const gbpLabels = ['1.24940', '', '1.24630', '1.24475', '1.24320', '1.24165', '1.24010', '1.23855', '1.23700', '1.23545', '1.23390', '1.23235', '1.23080', '1.22925', '1.22770', '1.22615'];

const EurChart = () => (
  <ChartSvg viewBox={`0 0 ${W} 373`} preserveAspectRatio="xMinYMin meet" role="img" aria-label="EURUSD hourly candles">
    <Grid ys={eurYs} top={2} bottom={349} />
    <PriceAxis ys={eurYs} labels={eurLabels} />
    <PriceTag at={178} text="1.03730" />
    <g fill={LIME}><rect x={50} y={15} width={1} height={13} /><rect x={54} y={15} width={1} height={13} /><rect x={58} y={24} width={1} height={4} /><rect x={2} y={76} width={2} height={7} /></g>
    <Candles bars={eurBars} start={23} step={4} y={mapY} />
    <path d={maPath(eurMa)} fill="none" stroke="#f00" />
    <Frame top={2} bottom={349} />
    <TimeAxis y={349} labels={leftTimes} />
    <ChartCaption>{'EURUSD, H1:  Euro vs US Dollar'}</ChartCaption>
  </ChartSvg>
);

const ChfChart = () => (
  <ChartSvg viewBox={`0 0 ${W} 404`} preserveAspectRatio="xMinYMin meet" role="img" aria-label="USDCHF hourly bars">
    <Grid ys={chfYs} top={2} bottom={380} />
    <PriceAxis ys={chfYs} labels={chfLabels} />
    <PriceTag at={232} text="0.90564" />
    <OhlcBars bars={chfBars} y={mapY} />
    <path d={maPath(chfMa)} fill="none" stroke="#f00" />
    <Frame top={2} bottom={380} />
    <TimeAxis y={380} labels={leftTimes} />
    <ChartCaption>{'USDCHF, H1:  US Dollar vs Swiss Franc'}</ChartCaption>
  </ChartSvg>
);

const GbpChart = () => (
  <ChartSvg viewBox={`0 0 ${W} 822`} preserveAspectRatio="xMinYMin meet" role="img" aria-label="GBPUSD hourly candles with CCI">
    <Grid ys={gbpYs} top={2} bottom={531} />
    <Grid ys={[648]} top={533} bottom={798} />
    <g stroke="#d8d8d8" strokeDasharray="2 2" shapeRendering="crispEdges"><path d="M2 613.500H653M2 684.500H653" /></g>
    <PriceAxis ys={gbpYs} labels={gbpLabels} />
    <PriceTag at={46} text="1.24790" />
    <Candles bars={gbpBars} start={0} step={8} y={gbpY} />
    <Frame top={2} bottom={531} />
    <Frame top={533} bottom={798} />
    <PriceAxis ys={[613, 648, 684]} labels={['100.00', '0.00', '-100.00']} />
    <g fill="#fff">
      <rect x={RIGHT} y={534} width={5} height={1} />
      <rect x={RIGHT} y={797} width={5} height={1} />
      <text x={659} y={545}>324.82</text>
      <text x={659} y={796}>-420.77</text>
      <text x={5} y={549}>CCI(14) 147.64</text>
    </g>
    <path d={path(cci.map((v, i) => [LEFT + 0.5 + i * 8, v / 3 + 521]))} fill="none" stroke="#20a59c" />
    <TimeAxis y={798} labels={rightTimes} />
    <ChartCaption>{'GBPUSD, H1:  Great Britain Pound vs US Dollar'}</ChartCaption>
  </ChartSvg>
);

/* ---------- composed parts ---------- */

type Quote = [string, string, string];

const PriceParts = ({ q }: { q: Quote }) => (
  <>
    <PriceSmall>{q[0]}</PriceSmall>
    <PriceBig>{q[1]}</PriceBig>
    <PriceSmall $raised>{q[2]}</PriceSmall>
  </>
);

function TradePanel({ tone, sell, buy }: { tone: Tone; sell: Quote; buy: Quote }) {
  return (
    <TradeBox onSubmit={e => e.preventDefault()}>
      <TradeTop>
        <SideButton $tone={tone} type="button"><SideText $tone={tone}>SELL</SideText></SideButton>
        <Volume>
          <Step type="button" aria-label="Decrease volume"><svg width="7" height="4"><path d="M0 0h7L3.500 4z" /></svg></Step>
          <VolumeInput aria-label="Volume" defaultValue="0.01" />
          <Step type="button" aria-label="Increase volume"><svg width="7" height="4"><path d="M0 4h7L3.500 0z" /></svg></Step>
        </Volume>
        <SideButton $tone={tone} type="button"><SideText $tone={tone}>BUY</SideText></SideButton>
      </TradeTop>
      <TradeRow>
        <PriceButton $tone={tone} type="button"><PriceParts q={sell} /></PriceButton>
        <PriceButton $tone={tone} type="button"><PriceParts q={buy} /></PriceButton>
      </TradeRow>
    </TradeBox>
  );
}

type WindowProps = {
  title: string;
  active?: boolean;
  tall?: boolean;
  shift?: 'left' | 'right';
  children: React.ReactNode;
};

function ChartWindow({ title, active, tall, shift, children }: WindowProps) {
  return (
    <Win $active={active} $tall={tall} $shift={shift}>
      <WinBar $active={active}>
        <WinIcon />
        <WinTitle>{title}</WinTitle>
        <WinButtons $active={active}>
          <WinButton aria-label="Minimize"><svg width="12" height="12"><path d="M0 11h11" stroke="currentColor" strokeWidth="1.500" /></svg></WinButton>
          <WinButton aria-label="Maximize"><svg width="12" height="12"><rect x="1" y="1" width="10" height="10" fill="none" stroke="currentColor" strokeWidth="1.500" /></svg></WinButton>
          <WinButton aria-label="Close"><svg width="12" height="12"><path d="M1 1l10 10M11 1L1 11" stroke="currentColor" strokeWidth="1.500" /></svg></WinButton>
        </WinButtons>
      </WinBar>
      <Canvas>{children}</Canvas>
    </Win>
  );
}

type Ink = 'r' | 'b' | 'k';
const quotes: [string, 'd' | 'u' | 'f', string, Ink, string, Ink, string, Ink][] = [
  ['XAUUSD', 'd', '2843.55', 'r', '2843.72', 'r', '1.05%', 'b'],
  ['XPTUSD', 'd', '968.74', 'b', '969.50', 'r', '0.46%', 'b'],
  ['AUS200', 'd', '8436', 'r', '8442', 'b', '0.14%', 'b'],
  ['CHCUSD', 'd', '13054.94', 'r', '13061.74', 'r', '1.07%', 'b'],
  ['EUSTX50', 'f', '5254', 'k', '5257', 'r', '1.04%', 'b'],
  ['FRA40', 'u', '7899', 'b', '7902', 'b', '0.80%', 'b'],
  ['GER40', 'd', '21482', 'r', '21486', 'r', '0.38%', 'b'],
  ['HK50', 'd', '20927', 'r', '20949', 'r', '2.34%', 'b'],
  ['HSCHKD', 'u', '7689.62', 'b', '7706.22', 'b', '2.76%', 'b'],
  ['JPN225', 'd', '38980', 'r', '39007', 'r', '-0.46%', 'r'],
  ['NAS100', 'u', '21446', 'b', '21449', 'b', '0.16%', 'b'],
  ['NETH25', 'u', '917.50', 'b', '918.02', 'r', '0.38%', 'b'],
  ['SGCSGD', 'u', '386.17', 'b', '389.40', 'b', '0.22%', 'b'],
  ['SWI20', 'u', '12504.98', 'b', '12511.18', 'r', '-0.41%', 'r'],
  ['TW88', 'd', '1878.62', 'r', '1879.20', 'b', '0.51%', 'b'],
  ['UK100', 'u', '8550', 'b', '8552', 'r', '0.08%', 'b'],
  ['US2000', 'u', '2273.95', 'r', '2274.33', 'b', '0.31%', 'b'],
];

const marks = { d: <DownMark />, u: <UpMark />, f: <FlatMark /> };

const tree: { label: string; icon: React.ReactNode; level: 1 | 2; box: '+' | '-' | null; end?: boolean }[] = [
  { label: 'Accounts', icon: <AccountsIcon />, level: 1, box: '+' },
  { label: 'Indicators', icon: <IndicatorIcon />, level: 1, box: '-' },
  { label: 'Trend', icon: <FolderIcon />, level: 2, box: '+' },
  { label: 'Oscillators', icon: <FolderIcon />, level: 2, box: '+' },
  { label: 'Volumes', icon: <FolderIcon />, level: 2, box: '+' },
  { label: 'Bill Williams', icon: <FolderIcon />, level: 2, box: '+' },
  { label: 'Examples', icon: <FolderIcon />, level: 2, box: '+' },
  { label: 'Free Indicators', icon: <FolderIcon />, level: 2, box: '+', end: true },
  { label: 'Expert Advisors', icon: <ExpertIcon />, level: 1, box: '+' },
  { label: 'Scripts', icon: <ScriptIcon />, level: 1, box: '+' },
  { label: 'Services', icon: <ServiceIcon />, level: 1, box: null },
  { label: 'Market', icon: <BagIcon s={20} />, level: 1, box: '+' },
  { label: 'VPS', icon: <CloudIcon s={20} />, level: 1, box: '+', end: true },
];

const PanelHeader = ({ title, active }: { title: string; active?: boolean }) => (
  <PanelHead>
    <PanelTitle $active={active}>{title}</PanelTitle>
    <PanelClose aria-label={`Close ${title}`}><svg width="8" height="8"><path d="M0 0l8 8M8 0L0 8" stroke="#000" strokeWidth="1.700" /></svg></PanelClose>
  </PanelHead>
);

export default function App() {
  return (
    <Shell>
      <Global />
      <TopStrip />
      <MenuBar>
        {['File', 'View', 'Insert', 'Charts', 'Tools', 'Window', 'Help'].map(m => <MenuItem key={m}>{m}</MenuItem>)}
      </MenuBar>
      <Toolbars>
        <ToolGroup>
          <Grip />
          <Tool $on aria-label="Cursor"><CursorIcon /></Tool>
          <Tool aria-label="Crosshair"><CrossIcon /></Tool>
          <ToolSep />
          <Tool aria-label="Vertical line"><VLineIcon /></Tool>
          <Tool aria-label="Horizontal line"><HLineIcon /></Tool>
          <Tool aria-label="Trendline"><TrendIcon /></Tool>
          <Tool aria-label="Channel"><ChannelIcon /></Tool>
          <Tool aria-label="Fibonacci"><FiboIcon /></Tool>
          <Tool aria-label="Text"><TextIcon /></Tool>
          <Tool aria-label="Shapes" $w={52}><ShapesIcon /><Caret /></Tool>
        </ToolGroup>
        <ToolGroup $wide>
          <Grip $space={6} />
          {['M1', 'M5', 'M15', 'M30', 'H1', 'H4', 'D1', 'W1', 'MN'].map(t => <Tool key={t} $ink={BLUE} $on={t === 'H1'}>{t}</Tool>)}
        </ToolGroup>
        <ToolGroup $grow>
          <Grip />
          <Tool aria-label="Chart type" $w={51}><ChartTypeIcon /><Caret /></Tool>
          <Tool aria-label="Templates" $w={51}><TemplateIcon /><Caret /></Tool>
          <Tool aria-label="Trade"><DollarIcon /></Tool>
          <ToolSep />
          <Tool $ink={BLUE}>IDE</Tool>
          <Tool aria-label="Market"><BagIcon /></Tool>
          <Tool aria-label="Signals"><SignalIcon /></Tool>
          <Tool aria-label="VPS"><CloudIcon /></Tool>
          <Tool aria-label="Register"><PrintIcon /></Tool>
          <ToolSep />
          <Tool $w={129} $left={10}><AlgoIcon />Algo Trading</Tool>
          <Tool $w={113} $left={7}><OrderIcon />New Order</Tool>
          <ToolSep />
          <Tool aria-label="Bar chart"><BarsIcon /></Tool>
          <Tool aria-label="Candlesticks" $on><CandlesIcon /></Tool>
          <Tool aria-label="Line chart"><LineIcon /></Tool>
          <ToolSep />
          <Tool aria-label="Zoom in"><Zoom plus /></Tool>
          <Tool aria-label="Zoom out"><Zoom /></Tool>
          <Tool aria-label="Tile windows"><TileIcon /></Tool>
          <ToolSep />
          <Tool aria-label="Auto scroll" $on><AutoScrollIcon /></Tool>
          <Tool aria-label="Chart shift"><ChartShiftIcon /></Tool>
          <ToolSep />
          <Tool aria-label="Screenshot"><CameraIcon /></Tool>
          <Tool aria-label="Search"><SearchIcon /></Tool>
          <Tool aria-label="Account"><UserIcon /><Badge>1</Badge></Tool>
          <Spacer />
          <LevelTool><svg width="12" height="11" fill={MINT} stroke={GREEN}><path d="M6 1l5 4H8v5H4V5H1z" /></svg>LVL</LevelTool>
          <LevelMeter />
        </ToolGroup>
      </Toolbars>
      <Body>
        <Sidebar>
          <Panel $share={492}>
            <PanelHeader title="Market Watch: 19:37:34" />
            <PanelBox>
              <ListArea>
                <QuoteTable>
                  <colgroup><col width="161" /><col width="80" /><col width="80" /><col width="83" /></colgroup>
                  <thead>
                    <tr><HeadCell $left>Symbol</HeadCell><HeadCell>Bid</HeadCell><HeadCell>Ask</HeadCell><HeadCell>Daily Ch...</HeadCell></tr>
                  </thead>
                  <tbody>
                    {quotes.map(([name, dir, bid, bi, ask, ai, day, di], i) => (
                      <QuoteRow key={name} $gold={i < 2}>
                        <Cell><SymbolName>{marks[dir]}{name}</SymbolName></Cell>
                        <Cell $ink={bi}>{bid}</Cell>
                        <Cell $ink={ai}>{ask}</Cell>
                        <Cell $ink={di}>{day}</Cell>
                      </QuoteRow>
                    ))}
                  </tbody>
                </QuoteTable>
                <Scroller><Thumb /></Scroller>
              </ListArea>
              <TabStrip>
                <Tab $on $w={82}>Symbols</Tab>
                <Tab $w={71} $sep>Details</Tab>
                <Tab $w={76} $sep>Trading</Tab>
                <Tab $w={57}>Ticks</Tab>
              </TabStrip>
            </PanelBox>
          </Panel>
          <Panel $share={402}>
            <PanelHeader title="Navigator" active />
            <PanelBox>
              <Tree>
                <RootItem><LogoIcon /><RootLabel>MetaTrader 5</RootLabel></RootItem>
                {tree.map(n => (
                  <TreeItem key={n.label}>
                    {n.level === 2 && <Rail />}
                    <Branch $end={n.end}>
                      {n.box && (
                        <Expander aria-label={`Toggle ${n.label}`}>
                          <svg width="9" height="9" stroke="#2a4a9a"><path d={n.box === '+' ? 'M1 4.500h7M4.500 1v7' : 'M1 4.500h7'} /></svg>
                        </Expander>
                      )}
                    </Branch>
                    {n.icon}
                    <TreeText>{n.label}</TreeText>
                  </TreeItem>
                ))}
              </Tree>
              <TabStrip>
                <Tab $on $w={87}>Common</Tab>
                <Tab $w={83}>Favorites</Tab>
              </TabStrip>
            </PanelBox>
          </Panel>
        </Sidebar>
        <Workspace>
          <Mdi>
            <ChartWindow title="EURUSD,H1" shift="left">
              <EurChart />
              <TradePanel tone="blue" sell={['1.03', '72', '6']} buy={['1.03', '73', '5']} />
            </ChartWindow>
            <ChartWindow title="USDCHF,H1" shift="right">
              <ChfChart />
              <TradePanel tone="red" sell={['0.90', '56', '0']} buy={['0.90', '57', '4']} />
            </ChartWindow>
            <ChartWindow title="GBPUSD,H1" active tall>
              <GbpChart />
              <TradePanel tone="blue" sell={['1.24', '78', '6']} buy={['1.24', '79', '6']} />
            </ChartWindow>
          </Mdi>
          <DocTabs>
            <Tab $w={113} $sep>EURUSD,H1</Tab>
            <Tab $w={109}>USDCHF,H1</Tab>
            <Tab $w={109} $on>GBPUSD,H1</Tab>
            <DocArrows>
              <ArrowButton aria-label="Scroll tabs left"><svg width="6" height="8" fill="#a8a8a8"><path d="M5 0v8L1 4z" /></svg></ArrowButton>
              <ArrowButton aria-label="Scroll tabs right"><svg width="6" height="8" fill="#a8a8a8"><path d="M1 0v8l4-4z" /></svg></ArrowButton>
            </DocArrows>
          </DocTabs>
        </Workspace>
      </Body>
      <StatusBar>
        <StatusCell>For Help, press F1</StatusCell>
        <StatusCell $w={165}>Default</StatusCell>
        <StatusCell $w={125} />
        <StatusCell $w={89} />
        <StatusCell $w={89} />
        <StatusCell $w={85} />
        <StatusCell $w={87} />
        <StatusCell $w={84} />
        <StatusCell $w={118}>
          <svg width="17" height="14" fill="#dadada" aria-hidden="true"><path d="M0 11h2v3H0zM4 9h2v5H4zM7 6h2v8H7zM11 3h2v11h-2zM15 0h2v14h-2z" /></svg>
          48.5 / 0.0 Mb
        </StatusCell>
      </StatusBar>
    </Shell>
  );
}
